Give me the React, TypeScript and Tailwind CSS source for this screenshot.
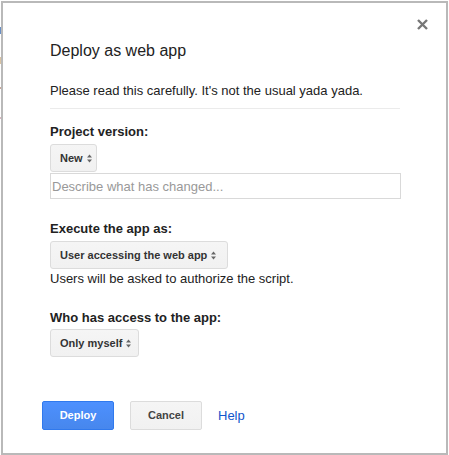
import type React from "react";

const Arrows = () => (
  <svg width="5" height="9" viewBox="0 0 5 9" className="ml-[4px] shrink-0">
    <path d="M2.5 0.5 L5 3.5 L0 3.5 Z" fill="#666" />
    <path d="M2.5 8.5 L5 5.5 L0 5.5 Z" fill="#666" />
  </svg>
);

const Select: React.FC<{ label: string; width: string }> = ({ label, width }) => (
  <div
    className={`flex items-center h-[28px] ${width} pl-[9px] rounded-[3px] border border-[#dcdcdc] bg-gradient-to-b from-[#f5f5f5] to-[#f1f1f1] text-[11px] font-bold text-[#333]`}
  >
    <span>{label}</span>
    <Arrows />
  </div>
);

export default function App() {
  return (
    <div className="flex w-[449px] h-[455px] bg-white font-['Liberation_Sans',Arial,sans-serif] text-[13px] text-[#222] pt-[1px]">
      {/* sliver of the page behind the dialog */}
      <div className="w-[1px] shrink-0 flex flex-col">
        <div className="h-[26px]" />
        <div className="h-[7px] bg-[#6a8fc4]" />
        <div className="h-[23px]" />
        <div className="h-[7px] bg-[#d9c3a3]" />
        <div className="h-[23px]" />
        <div className="h-[2px] bg-[#c8a89a]" />
        <div className="h-[28px]" />
        <div className="h-[2px] bg-[#d7b8c0]" />
      </div>

      <div className="relative w-[447px] h-[454px] border-2 border-[#b9b9b9] pt-[38px] pl-[47px] pr-[46px]">
        <button type="button" className="absolute top-[16px] right-[18px] p-0">
          <svg width="11" height="11" viewBox="0 0 11 11">
            <path d="M1 1 L10 10 M10 1 L1 10" stroke="#777" strokeWidth="2.4" />
          </svg>
        </button>

        <h1 className="text-[16px] leading-[20px] font-normal text-[#222]">Deploy as web app</h1>

        <p className="mt-[22px] leading-[16px]">Please read this carefully. It's not the usual yada yada.</p>

        <div className="mt-[9px] w-[350px] h-px bg-[#ebebeb]" />

        <div className="mt-[15px] font-bold leading-[16px]">Project version:</div>
        <div className="mt-[4px]">
          <Select label="New" width="w-[47px]" />
        </div>
        <input
          className="mt-[1px] block w-[351px] h-[26px] border border-[#d9d9d9] px-[1px] text-[13px] outline-none placeholder:text-[#999]"
          placeholder="Describe what has changed..."
        />

        <div className="mt-[22px] font-bold leading-[16px]">Execute the app as:</div>
        <div className="mt-[4px]">
          <Select label="User accessing the web app" width="w-[178px]" />
        </div>
        <p className="mt-[2px] leading-[16px]">Users will be asked to authorize the script.</p>

        <div className="mt-[23px] font-bold leading-[16px]">Who has access to the app:</div>
        <div className="mt-[3px]">
          <Select label="Only myself" width="w-[89px]" />
        </div>

        <div className="mt-[44px] -ml-[8px] flex items-center gap-[16px]">
          <button
            type="button"
            className="w-[72px] h-[29px] rounded-[2px] border border-[#3079ed] bg-gradient-to-b from-[#4d90fe] to-[#4787ed] text-[11px] font-bold text-white"
          >
            Deploy
          </button>
          <button
            type="button"
            className="w-[72px] h-[29px] rounded-[2px] border border-[#dcdcdc] bg-gradient-to-b from-[#f5f5f5] to-[#f1f1f1] text-[11px] font-bold text-[#444]"
          >
            Cancel
          </button>
          <a href="#" className="text-[13px] text-[#15c]">
            Help
          </a>
        </div>
      </div>
    </div>
  );
}
